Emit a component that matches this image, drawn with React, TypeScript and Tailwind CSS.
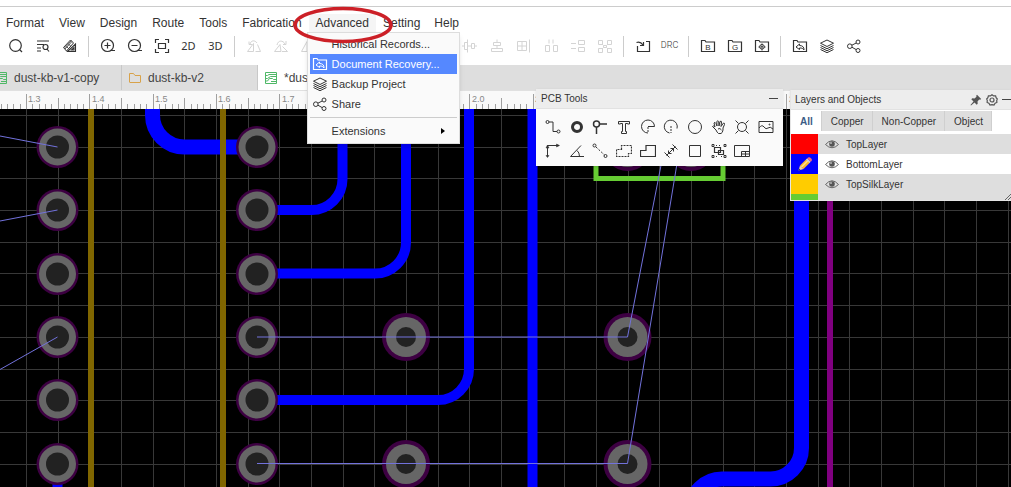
import { useState, type ReactNode } from 'react'
import clsx from 'clsx'

const MENUS = ['Format', 'View', 'Design', 'Route', 'Tools', 'Fabrication']

interface IconProps {
  children: ReactNode
  className?: string
}

function Icon({ children, className }: IconProps) {
  return (
    <svg
      viewBox="0 0 16 16"
      fill="none"
      stroke="currentColor"
      strokeWidth="1"
      className={clsx('size-4 shrink-0', className)}
      aria-hidden="true"
    >
      {children}
    </svg>
  )
}

const FOLDER = 'M1.5 13.5V2.5H5l1 1.5h8.5v9.5z'

const icons: Record<string, ReactNode> = {
  search: (
    <>
      <circle cx="7.5" cy="7.5" r="5.8" strokeWidth="1.2" />
      <path d="M11.5 11.5l2.5 2.5" strokeWidth="1.2" />
    </>
  ),
  findList: (
    <>
      <path d="M2 3h12M2 6.5h7M2 10h4M2 13h4" strokeWidth="1.2" />
      <circle cx="10.5" cy="9" r="2.5" strokeWidth="1.2" />
      <path d="M12 11l2 2.5" strokeWidth="1.2" />
    </>
  ),
  clean: (
    <>
      <path d="M1.5 9.500L8.500 2l3 3-7 8z" />
      <path d="M3 11l7-7.500M2.500 10l7-7.500M4.500 8.500l2 2M6.500 6l2 2" strokeWidth=".8" />
      <path d="M5.500 13.500l8-7.500v7.500zM9.500 12l2.500-2.500V12z" strokeWidth="1.1" />
    </>
  ),
  zoomIn: (
    <>
      <circle cx="7.5" cy="7.5" r="6" strokeWidth="1.2" />
      <path d="M4.5 7.5h6M7.5 4.5v6M11 12.5h4" strokeWidth="1.2" />
    </>
  ),
  zoomOut: (
    <>
      <circle cx="7.5" cy="7.5" r="6" strokeWidth="1.2" />
      <path d="M4.5 7.5h6M11 12.5h4" strokeWidth="1.2" />
    </>
  ),
  fit: (
    <path
      d="M1.5 5V1.5H5M11 1.5h3.5V5M14.5 11v3.5H11M5 14.5H1.5V11M4.5 5.5h7v5h-7z"
      strokeWidth="1.2"
    />
  ),
  rotateLeft: <path d="M1.5 13.5h6v-8zM9.5 13.5h5l-3-7M4 6c1-4 5-4 7-1M3 3.5V6.5h3" />,
  rotateRight: <path d="M1.5 13.5h6.5l-1-7zM9 13.5h5.5l-5-5M4 7c1-5 6-5 8-1M13 3v3.5h-3" />,
  flip: <path d="M1.5 13.5h5.5v-10zM9.5 13.5h5.500l-5.500-10z" />,
  alignV: <path d="M5.5 1.500v13M2.500 4.500h3v7h-3zM9.500 5.500h3v5h-3zM0 8h2.500M5.500 8h4M12.500 8H15" />,
  alignH: <path d="M4.5 4.5h7v3h-7zM2.5 10.5h11v3h-11zM8 1.500v3M8 7.500v3" />,
  alignGrid: <path d="M1.5 3.5h9v9h-9zM6 3.5v9M1.5 8h9M13.500 1.500v13" />,
  distribute: <path d="M6 1.500v4M10 1.500v4M2.500 7.500h4v6h-4zM10.500 7.500h4v6h-4z" />,
  distributeH: <path d="M1 5.5h5M1 10.5h5M8.5 2.500h6v4h-6zM8.5 9.500h6v4h-6z" />,
  group: (
    <path d="M1.5 2.5h4v4h-4zM10.5 2.5h4v4h-4zM1.500 10.500h4v4h-4zM10.500 10.500h4v4h-4zM5 6l1.500 1.500h3L11 6M5 11l1.500-1.500h3L11 11M6.500 7.500v2M9.500 7.500v2" />
  ),
  importIcon: <path d="M2.5 8v5.500h12v-10H11M1.500 4.500c3-1 4.500-.5 6.500 2.500M8.500 4v3.500H5" strokeWidth="1.2" />,
  recover: (
    <>
      <path d={FOLDER} strokeWidth="1.2" />
      <path d="M7.5 6l-3.500 3 3.500 2.500V10c2.500-.3 3.500.7 4.500 2 .2-3-1.500-4.500-4.500-4.500z" />
    </>
  ),
  target: (
    <>
      <path d={FOLDER} strokeWidth="1.2" />
      <circle cx="8" cy="8.8" r="2.3" />
      <path d="M8 5.5v2M8 10.5v2M4.5 9h2M9.5 9h2" />
      <circle cx="8" cy="8.8" r=".6" fill="currentColor" />
    </>
  ),
  layers: (
    <path d="M8 2L14.5 5.2 8 8.5 1.5 5.2zM1.5 7.5L8 10.7l6.5-3.2M1.5 9.5L8 12.7l6.5-3.2M1.5 11.5L8 14.7l6.5-3.2" />
  ),
  share: (
    <>
      <circle cx="3.8" cy="8.2" r="2.3" />
      <circle cx="12" cy="4" r="2" />
      <circle cx="12" cy="12.5" r="2" />
      <path d="M5.9 7.2L10.2 5M5.9 9.2l4.3 2.4" />
    </>
  ),
}

function FolderLetter({ letter }: { letter: string }) {
  return (
    <Icon>
      <path d={FOLDER} strokeWidth="1.2" />
      <text
        x="8"
        y="12"
        textAnchor="middle"
        fontSize="8"
        fill="currentColor"
        stroke="none"
        className="font-['Liberation_Sans',sans-serif]"
      >
        {letter}
      </text>
    </Icon>
  )
}

interface Tool {
  name: string
  node: ReactNode
  disabled?: boolean
}

const ic = (name: string, key: string, disabled = false): Tool => ({
  name,
  node: <Icon>{icons[key]}</Icon>,
  disabled,
})

const TOOLBAR: Tool[][] = [
  [ic('Search', 'search'), ic('Find list', 'findList'), ic('Clean', 'clean')],
  [
    ic('Zoom in', 'zoomIn'),
    ic('Zoom out', 'zoomOut'),
    ic('Fit window', 'fit'),
    { name: '2D view', node: <span className="font-['Noto_Sans',sans-serif] text-[11px]">2D</span> },
    { name: '3D view', node: <span className="font-['Noto_Sans',sans-serif] text-[11px]">3D</span> },
  ],
  [
    ic('Rotate left', 'rotateLeft', true),
    ic('Rotate right', 'rotateRight', true),
    ic('Flip horizontal', 'flip', true),
    ic('Flip vertical', 'flip', true),
    ic('Align left', 'alignV', true),
    ic('Align right', 'alignV', true),
    ic('Align top', 'alignH', true),
    ic('Align bottom', 'alignH', true),
    ic('Align center', 'alignV', true),
    ic('Align middle', 'alignH', true),
    ic('Align grid', 'alignGrid', true),
    ic('Distribute horizontally', 'distribute', true),
    ic('Distribute vertically', 'distributeH', true),
    ic('Distribute array', 'group', true),
  ],
  [
    ic('Import changes', 'importIcon'),
    {
      name: 'Design rule check',
      node: <span className="font-[Roboto,sans-serif] text-[9px] font-light">DRC</span>,
    },
  ],
  [
    { name: 'BOM', node: <FolderLetter letter="B" /> },
    { name: 'Gerber', node: <FolderLetter letter="G" /> },
    ic('Pick and place', 'target'),
  ],
  [ic('Document recovery', 'recover'), ic('Backup project', 'layers'), ic('Share', 'share')],
]

function Toolbar() {
  return (
    <div className="flex h-7 items-center pl-0.5">
      {TOOLBAR.map((group, i) => (
        <div key={i} className="flex items-center">
          {i > 0 && <span className="mx-[5px] h-[21px] w-px bg-[#cccccc]" />}
          {group.map((tool) => (
            <button
              key={tool.name}
              aria-label={tool.name}
              disabled={tool.disabled}
              className="flex h-6 w-[27px] shrink-0 items-center justify-center text-[#333333] disabled:text-[#d4d4d4]"
            >
              {tool.node}
            </button>
          ))}
        </div>
      ))}
    </div>
  )
}

const ADVANCED_ITEMS = [
  { label: 'Historical Records...', icon: '' },
  { label: 'Document Recovery...', icon: 'recover' },
  { label: 'Backup Project', icon: 'layers' },
  { label: 'Share', icon: 'share' },
]

function AdvancedMenu() {
  return (
    <div className="absolute top-full -left-0.5 z-20 w-[153px] border border-[#dddddd] bg-[#fafafa] px-0.5 pt-px pb-0.5 text-[11px] shadow-md">
      {ADVANCED_ITEMS.map((item) => (
        <button
          key={item.label}
          className={clsx(
            'flex h-5 w-full items-center gap-1 pl-0.5 text-left whitespace-nowrap',
            item.icon === 'recover' ? 'bg-[#5588ff] text-white' : 'text-[#333333]'
          )}
        >
          <span className="size-4">{item.icon && <Icon>{icons[item.icon]}</Icon>}</span>
          {item.label}
        </button>
      ))}
      <hr className="my-[3px] border-[#cccccc]" />
      <button className="flex h-5 w-full items-center justify-between pr-3 pl-[22px] text-[#333333]">
        Extensions
        <svg viewBox="0 0 4 6" className="h-1.5 w-1 fill-black" aria-hidden="true">
          <path d="M0 0l4 3-4 3z" />
        </svg>
      </button>
    </div>
  )
}

function MenuBar() {
  const item = 'h-[18px] px-[7px]'
  return (
    <nav className="-ml-px flex text-xs text-[#333333]">
      <div className="flex gap-px">
        {MENUS.map((menu) => (
          <button key={menu} className={item}>
            {menu}
          </button>
        ))}
      </div>
      <div className="relative">
        <button className={clsx(item, 'bg-[#f5f5f5]')} aria-expanded="true">
          Advanced
        </button>
        <AdvancedMenu />
        <svg
          viewBox="0 0 102 40"
          className="pointer-events-none absolute -top-[9px] -left-[17px] z-30 h-10 w-[102px]"
          fill="none"
          stroke="#cc2027"
          strokeWidth="3.5"
          aria-hidden="true"
        >
          <ellipse cx="51" cy="20" rx="48" ry="16.5" />
        </svg>
      </div>
      <button className={item}>Setting</button>
      <button className={item}>Help</button>
    </nav>
  )
}

function BoardIcon() {
  return (
    <svg viewBox="0 0 12 12" className="size-3 shrink-0" fill="none" stroke="#4fb867" aria-hidden="true">
      <path d="M.5.5h11v11H.5zM.5 3.5h2l1.5-1h7.5M.5 6.5h2l3-2h6M.5 9h2l2-2.5h3l1 1h3M6 9.5h5" />
    </svg>
  )
}

function DocumentTabs() {
  const tab = 'flex h-full items-center gap-[7px] border-r border-[#c8c8c8] pl-[7px] text-xs text-[#444444]'
  return (
    <div role="tablist" className="flex h-[25px] overflow-hidden bg-[#dedede]">
      <button role="tab" className={clsx(tab, '-ml-3 w-[134px]')}>
        <BoardIcon />
        dust-kb-v1-copy
      </button>
      <button role="tab" className={clsx(tab, 'w-[136px]')}>
        <svg viewBox="0 0 12 12" className="size-3 shrink-0" fill="none" stroke="#d8a24a" aria-hidden="true">
          <path d="M.5 10V1.5h4l1.5 2h5.5V10q0 .5-.5.5H1q-.5 0-.5-.5z" />
        </svg>
        dust-kb-v2
      </button>
      <button role="tab" aria-selected="true" className={clsx(tab, 'w-[150px] bg-white')}>
        <BoardIcon />
        *dust-kb-v2
      </button>
    </div>
  )
}

// one ruler unit (0.1) in canvas pixels
const UNIT = 63.35
const ORIGIN_X = 26.4
const LABELS = ['1.3', '1.4', '1.5', '1.6', '1.7', '1.8', '1.9', '2.0', '2.1', '2.2', '2.3', '2.4', '2.5']

function Ruler() {
  const ticks = Array.from({ length: 400 }, (_, i) => i - 5)
  return (
    <svg className="h-[19px] w-full shrink-0 border-t border-[#e0e0e0] bg-[#f9f9f9]" aria-hidden="true">
      {ticks.map((i) => {
        const x = Math.floor(ORIGIN_X + (i * UNIT) / 10) + 0.5
        const top = i % 10 === 0 ? 3 : i % 5 === 0 ? 7 : 13
        return <line key={i} x1={x} x2={x} y1={top} y2="18" stroke="#a0a0a0" />
      })}
      {LABELS.map((label, i) => (
        <text key={label} x={Math.round(ORIGIN_X + i * UNIT) + 2} y="11" fontSize="9" fill="#888888">
          {label}
        </text>
      ))}
    </svg>
  )
}

const PAD_ROWS = [38, 101, 165, 228, 291, 355]

interface PadProps {
  x: number
  y: number
  large?: boolean
}

function Pad({ x, y, large }: PadProps) {
  return (
    <g>
      <circle cx={x} cy={y} r={large ? 24 : 21} fill="#3d0042" />
      <circle cx={x} cy={y} r={large ? 20 : 18.5} fill="#666666" />
      <circle cx={x} cy={y} r={large ? 10 : 11.5} fill="#222222" />
    </g>
  )
}

function Canvas() {
  const lines = Array.from({ length: 80 }, (_, i) => i)
  return (
    <div className="relative min-h-0 flex-1 bg-black">
      <svg className="absolute inset-0 size-full" aria-label="PCB canvas">
        <g stroke="#383838">
          {lines.map((i) => {
            const x = Math.floor(ORIGIN_X + (i * UNIT) / 2) + 0.5
            return <line key={i} x1={x} x2={x} y1="0" y2="100%" />
          })}
          {lines.map((i) => {
            const y = Math.floor(6.6 + (i * UNIT) / 2) + 0.5
            return <line key={i} x1="0" x2="100%" y1={y} y2={y} />
          })}
        </g>

        {/* copper, bottom layer */}
        <g fill="none" stroke="#0000ff">
          <g strokeWidth="15">
            <path d="M152.5 0V6A32 32 0 0 0 184.5 38H257" />
            <path d="M801.5 0V339A31 31 0 0 1 770.5 370H722A31 31 0 0 0 691 401" />
          </g>
          <g strokeWidth="10">
            <path d="M257 101H311.5A31 31 0 0 0 342.5 70V0" />
            <path d="M257 164.5H375A31 31 0 0 0 406 133.5V0" />
            <path d="M257 291H438A31 31 0 0 0 469 260V0" />
            <path d="M532.5 0V2000" />
            <path d="M57.5 355V2000" />
          </g>
        </g>

        <g strokeWidth="6" stroke="#806600">
          <path d="M91 0V2000" />
          <path d="M223 0V2000" />
        </g>
        <path d="M830 0V2000" strokeWidth="6" stroke="#800080" />

        {PAD_ROWS.map((y) => (
          <g key={y}>
            <Pad x={57.5} y={y} />
            <Pad x={257} y={y} />
          </g>
        ))}
        {[406, 627.5].map((x) => (
          <g key={x}>
            <Pad x={x} y={228} large />
            <Pad x={x} y={355} large />
          </g>
        ))}
        <Pad x={627.5} y={38} large />
        <Pad x={691} y={38} large />
        <path d="M596 0V69.5H723V0" fill="none" stroke="#66cc33" strokeWidth="5" />

        {/* ratlines */}
        <g stroke="#7272dc" fill="none">
          <path d="M0 27L57.5 38M0 112L57.5 101M0 260.5L57.5 228" />
          <path d="M257 228H627.5L672 0" />
          <path d="M257 354.5H627.5L686 0" />
        </g>
      </svg>
    </div>
  )
}

const PCB_TOOLS: [string, ReactNode][] = [
  ['Track', <><circle cx="2.5" cy="3" r="1.5" /><circle cx="13.5" cy="12.5" r="1.5" /><path d="M4 3h4v9.5h4" /></>],
  ['Pad', <circle cx="8" cy="8" r="4.5" strokeWidth="3" />],
  ['Via', <><circle cx="4.5" cy="5" r="3" strokeWidth="1.5" /><path d="M7.5 5H15M4.5 8v7" strokeWidth="1.5" /></>],
  ['Text', <path d="M2.5 5V2.5h11V5h-2V4.5h-2v8h1v2h-5v-2h1v-8h-2V5z" />],
  ['Arc', <><path d="M8 14A6.5 6.5 0 1 1 14.5 7.5H8" /><path d="M8 8v6" strokeDasharray="2 1" /></>],
  ['Arc by center', <><path d="M6.5 14A6.5 6.5 0 1 1 14 9.5" /><path d="M8 7v7" strokeDasharray="2 1" /></>],
  ['Circle', <circle cx="8" cy="8" r="6.5" />],
  ['Move', <path d="M5 11L1.5 7.5Q2 6 4 8L3 4Q4 2.5 5 4.5L6 7 5.8 2.5Q7 1 7.7 2.5L8 7l1-4.5q1.5-1 1.5.5L10 7.5 12.5 4q1.5 0 1 1.5L12 9v2q-.5 3-2 3.5H7.5Q6 13.5 5 11zM7 10q2-1.5 3.5 1" />],
  ['Hole', <><circle cx="8" cy="8" r="4.5" /><path d="M1.5 1.5l3 3M14.5 1.5l-3 3M1.5 14.5l3-3M14.5 14.5l-3-3" /></>],
  ['Image', <><path d="M1 2.5h14v11H1zM1 9q3-4 5-1t4 1 5 1" /><circle cx="11.5" cy="5.5" r=".5" /></>],
  ['Canvas origin', <><path d="M2.5 14V2.5H14" /><path d="M1 5l1.5-3L4 5zM11.5 1l3 1.5-3 1.5zM1 12.5h3l-1.5 2z" fill="currentColor" strokeWidth=".5" /></>],
  ['Protractor', <path d="M12 2.5L1.5 13.5H15M8 7.5q2.500 2 2.500 6" />],
  ['Connect pads', <><circle cx="2.5" cy="2.5" r="1.5" /><circle cx="13.5" cy="13" r="1.5" /><path d="M4 4l8.5 8" strokeDasharray="2 1.5" /></>],
  ['Copper area', <path d="M5.5 6.5v-4h10v8h-3v3H.5v-7z" strokeDasharray="2 1" strokeWidth="1.2" />],
  ['Solid region', <path d="M6 2.5h9.5v11H.5v-6H6z" strokeWidth="1.2" />],
  ['Dimension', <path d="M3.5 12.500l9-9M1.500 9.500l5 5M9.500 1.500l5 5M5.500 7.500v3h3M7.500 5.500h3v3" />],
  ['Rectangle', <path d="M2.5 2.5h11v11h-11z" />],
  ['Group', <><path d="M3.5 4.5h6v5h-6zM7.5 7.5h5v4h-5z" strokeWidth="1.2" /><path d="M1 1.5h2v2H1zM13 1.5h2v2h-2zM1 12.5h2v2H1zM13 12.5h2v2h-2zM5 2.5h1M8 2.5h1M5 13.5h1M10 13.5h1" /></>],
  ['Sheet', <path d="M.5 2.5h15v11H.5zM7.5 13.5v-5h8M7.5 11h8M11.5 8.5v5" />],
]

function PcbTools() {
  return (
    <section className="absolute top-[89px] left-[536px] z-10 w-[247px] bg-[#fafafa] text-[#333333] shadow">
      <header className="flex h-5 items-center justify-between border-b border-[#e2e2e2] bg-[#ededed] px-[5px]">
        <h2 className="text-[10px]">PCB Tools</h2>
        <button aria-label="Minimize PCB Tools" className="flex h-4 w-[9px] items-center">
          <span className="h-px w-full bg-[#444444]" />
        </button>
      </header>
      <div className="grid grid-cols-10 px-[5px] pt-1.5 pb-[3px]">
        {PCB_TOOLS.map(([name, node]) => (
          <button key={name} aria-label={name} className="flex h-6 items-center justify-center">
            <Icon>{node}</Icon>
          </button>
        ))}
      </div>
    </section>
  )
}

const LAYERS = [
  { name: 'TopLayer', swatch: 'bg-[#ff0000]' },
  { name: 'BottomLayer', swatch: 'bg-[#0000ff]' },
  { name: 'TopSilkLayer', swatch: 'bg-[#ffcc00]' },
]

function Eye() {
  return (
    <svg viewBox="0 0 14 10" className="h-2.5 w-3.5" fill="none" stroke="#666666" aria-hidden="true">
      <path d="M.5 5.5Q7-2 13.5 5.5 7 12 .5 5.5z" />
      <circle cx="7" cy="5" r="2.8" fill="#555555" stroke="none" />
      <circle cx="6" cy="4" r=".8" fill="#ffffff" stroke="none" />
    </svg>
  )
}

function Pencil() {
  return (
    <svg viewBox="0 0 14 14" className="size-3.5" aria-hidden="true">
      <path d="M.5 13.5l1.500-5 3.500 3.500z" fill="#f3d3a0" />
      <path d="M2 8.500L8.500 2l3.500 3.500L5.500 12z" fill="#f7b731" />
      <path d="M3 9.500L9.500 3l1 1L4 10.500z" fill="#ffe08a" />
      <path d="M8 2.500l1.200-1.200 3.500 3.500L11.500 6z" fill="#c9ccd2" />
      <path d="M9.200 1.300Q11-.7 13 1.200T12.700 4.800z" fill="#ee6a7c" />
      <path d="M.5 13.500l.6-2 1.400 1.400z" fill="#333333" />
    </svg>
  )
}

function LayersPanel() {
  const [active, setActive] = useState('All')

  return (
    <section className="absolute top-[90px] right-0 z-10 w-[221px] overflow-hidden border-b border-l border-[#e5e5e5] bg-white text-[10px] text-[#333333] shadow">
      <header className="flex h-5 items-center border-b border-[#e2e2e2] bg-[#ededed] pl-1">
        <h2 className="flex-1">Layers and Objects</h2>
        <button aria-label="Pin panel" className="mr-1">
          <svg viewBox="0 0 12 12" className="size-3 fill-[#555555]" aria-hidden="true">
            <path d="M7 .8L11.2 5l-1 .8-1-.3-1.7 2 .2 2.2-1 1-2.200-2.200L1 11.500.500 11l3-3.500L1.300 5.300l1-1 2.200.2 2-1.700-.3-1z" />
          </svg>
        </button>
        <button aria-label="Panel settings" className="mr-1">
          <svg viewBox="0 0 12 12" className="size-3" fill="none" stroke="#555555" aria-hidden="true">
            <path
              d="M6 .7l1.6 1.200 2-.1.500 1.900 1.200 1.300-.6 1.500.2 2-1.800.8L8 11.100l-2-.5-2 .5-1.100-1.800-1.800-.8.200-2L.7 5l1.200-1.300.5-1.900 2 .1z"
              strokeWidth="1.2"
            />
            <circle cx="6" cy="6" r="2" strokeWidth="1.2" />
          </svg>
        </button>
        <button aria-label="Minimize panel" className="flex h-4 w-[9px] items-center">
          <span className="h-px w-full bg-[#444444]" />
        </button>
      </header>
      <div role="tablist" className="flex h-[21px] pt-px">
        {['All', 'Copper', 'Non-Copper', 'Object'].map((name) => (
          <button
            key={name}
            role="tab"
            aria-selected={active === name}
            onClick={() => setActive(name)}
            className={clsx(
              'px-[9px] shadow-[inset_-1px_0_#cfcfcf]',
              active === name ? 'bg-white font-bold text-[#3b5c85]' : 'bg-[#dedede]'
            )}
          >
            {name}
          </button>
        ))}
      </div>
      <ul className="mt-[3px]">
        {LAYERS.map((layer) => (
          <li key={layer.name} className="flex h-5 items-center odd:bg-[#dedede]">
            <button
              aria-label={`Edit ${layer.name}`}
              className={clsx('flex h-full w-[27px] items-center justify-center', layer.swatch)}
            >
              {layer.name === 'BottomLayer' && <Pencil />}
            </button>
            <button aria-label={`Toggle ${layer.name}`} className="mx-[7px]">
              <Eye />
            </button>
            {layer.name}
          </li>
        ))}
        <li className="flex h-1.5 justify-between bg-[#dedede]">
          <span className="w-[27px] bg-[#66cc33]" />
          <svg viewBox="0 0 7 6" className="h-1.5 w-[7px]" stroke="#666666" aria-hidden="true">
            <path d="M1 6l6-6M4 6l3-3" />
          </svg>
        </li>
      </ul>
    </section>
  )
}

export default function App() {
  return (
    <main className="relative flex h-screen flex-col overflow-hidden bg-white font-['Liberation_Sans',Arial,sans-serif]">
      <div className="mt-1.5 border-t border-[#cccccc] pt-[7px] pb-[5px]">
        <MenuBar />
        <Toolbar />
      </div>
      <DocumentTabs />
      <Ruler />
      <Canvas />
      <PcbTools />
      <LayersPanel />
    </main>
  )
}
